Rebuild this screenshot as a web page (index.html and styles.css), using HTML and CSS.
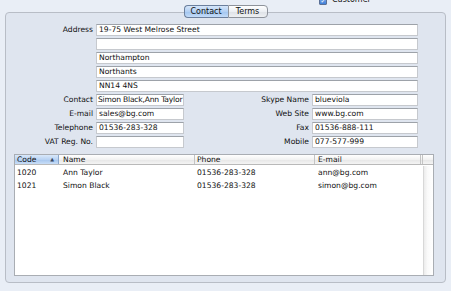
FILE: index.html
```html
<!DOCTYPE html>
<html>
<head>
    <title>Contact Card</title>
    <link rel="stylesheet" href="styles.css">
</head>
<body>
    <div class="topbar">
        <span class="check">&#10003;</span>
        <span class="check-label">Customer</span>
    </div>

    <div class="panel">
        <div class="tabs">
            <span class="tab active">Contact</span>
            <span class="tab">Terms</span>
        </div>

        <!-- Address block -->
        <div class="address">
            <label>Address</label>
            <div class="field">19-75 West Melrose Street</div>
            <label></label>
            <div class="field"></div>
            <label></label>
            <div class="field">Northampton</div>
            <label></label>
            <div class="field">Northants</div>
            <label></label>
            <div class="field">NN14 4NS</div>
        </div>

        <!-- Contact details -->
        <div class="details">
            <label>Contact</label>
            <div class="field tight">Simon Black,Ann Taylor</div>
            <label>Skype Name</label>
            <div class="field">blueviola</div>

            <label>E-mail</label>
            <div class="field">sales@bg.com</div>
            <label>Web Site</label>
            <div class="field">www.bg.com</div>

            <label>Telephone</label>
            <div class="field">01536-283-328</div>
            <label>Fax</label>
            <div class="field">01536-888-111</div>

            <label>VAT Reg. No.</label>
            <div class="field"></div>
            <label>Mobile</label>
            <div class="field">077-577-999</div>
        </div>

        <!-- Contact persons -->
        <div class="table">
            <div class="row head">
                <div class="cell sorted">Code <span class="arrow">&#9650;</span></div>
                <div class="cell">Name</div>
                <div class="cell">Phone</div>
                <div class="cell">E-mail</div>
                <div class="cell tiny"></div>
                <div class="cell corner"></div>
            </div>
            <div class="body">
                <div class="rows">
                    <div class="row">
                        <div class="cell">1020</div>
                        <div class="cell">Ann Taylor</div>
                        <div class="cell">01536-283-328</div>
                        <div class="cell">ann@bg.com</div>
                    </div>
                    <div class="row">
                        <div class="cell">1021</div>
                        <div class="cell">Simon Black</div>
                        <div class="cell">01536-283-328</div>
                        <div class="cell">simon@bg.com</div>
                    </div>
                </div>
                <div class="scroller"></div>
            </div>
        </div>
    </div>
</body>
</html>
```

FILE: styles.css
```css
body {
    margin: 0;
    background: #e9eef6;
    font-family: "DejaVu Sans", sans-serif;
    font-size: 7.6px;
    color: #111;
    height: 291px;
    overflow: hidden;
}

.topbar {
    height: 12px;
    padding-left: 319px;
    display: flex;
    align-items: flex-start;
    gap: 5px;
    font-size: 8px;
}

.check {
    margin-top: -4px;
    width: 6px;
    height: 7px;
    border: 1px solid #5a6f96;
    border-radius: 1px;
    background: linear-gradient(#8fb4ea, #3f7fd9);
    color: #fff;
    font-size: 6px;
    line-height: 7px;
    text-align: center;
}

.check-label {
    margin-top: -5px;
    line-height: 10px;
}

.panel {
    margin: 0 5px;
    height: 263px;
    border: 1px solid #b8bdc6;
    border-radius: 4px;
    background: #dfe5ef;
    padding: 0 11px 6px 0;
    display: flex;
    flex-direction: column;
}

.tabs {
    display: flex;
    justify-content: center;
    margin: -8px 0 0 11px;
    height: 13px;
}

.tab {
    height: 11px;
    line-height: 11px;
    padding: 0 6px;
    border: 1px solid #8e939b;
    background: linear-gradient(#ffffff, #eceff3 50%, #dde1e6 51%, #eef0f3);
    font-size: 8px;
}

.tab.active {
    width: 31px;
    text-align: center;
    border-radius: 4px 0 0 4px;
    border-right: none;
    background: linear-gradient(#d6e6fa, #b3d0f3 50%, #9fc3ef 51%, #c4dcf8);
    border-color: #6b7f9d;
}

.tab:last-child {
    width: 26px;
    text-align: center;
    border-radius: 0 4px 4px 0;
}

label {
    text-align: right;
    line-height: 12px;
    white-space: nowrap;
}

.field {
    height: 10px;
    line-height: 10px;
    border: 1px solid #c6c9ce;
    border-top-color: #9da2a9;
    background: #fff;
    padding-left: 2px;
    white-space: nowrap;
    overflow: hidden;
}

.field.tight {
    padding-left: 1px;
    letter-spacing: -0.2px;
}

.address {
    display: grid;
    grid-template-columns: 87px 1fr;
    column-gap: 3px;
    row-gap: 2px;
    margin: 6px 16px 0 0;
}

.details {
    display: grid;
    grid-template-columns: 87px 88px 1fr 106px;
    column-gap: 3px;
    row-gap: 2px;
    margin: 2px 16px 0 0;
}

.table {
    margin: 6px 0 0 8px;
    flex: 1;
    border: 1px solid #a9adb3;
    background: #fff;
    display: flex;
    flex-direction: column;
}

.row {
    display: flex;
    height: 13px;
    line-height: 13px;
}

.row.head {
    height: 9px;
    line-height: 9px;
    background: linear-gradient(#ffffff, #f2f2f2 50%, #e6e6e6 51%, #f4f4f4);
    border-bottom: 1px solid #b9b9b9;
}

.cell {
    padding-left: 2px;
    white-space: nowrap;
    overflow: hidden;
    box-sizing: border-box;
}

.cell:nth-child(1) { width: 44px; }
.cell:nth-child(2) { width: 136px; padding-left: 4px; }
.cell:nth-child(3) { width: 120px; }
.cell:nth-child(4) { width: 106px; padding-left: 3px; }

.head .cell {
    border-right: 1px solid #c4c4c4;
}

.head .cell.tiny {
    width: 2px;
    padding: 0;
}

.head .cell.corner {
    flex: 1;
    border-right: none;
}

.head .cell.sorted {
    position: relative;
    background: linear-gradient(#d9e8fa, #b9d3f3 50%, #a5c5ee 51%, #c9def7);
    border-right-color: #8aa7cc;
}

.arrow {
    position: absolute;
    right: 4px;
    top: 0;
    font-size: 5px;
    color: #3a4a62;
}

.body {
    flex: 1;
    display: flex;
    padding-top: 1px;
}

.rows {
    flex: 1;
}

.scroller {
    width: 9px;
    border-left: 1px solid #d8d8d8;
    background: linear-gradient(90deg, #ececec, #fafafa 40%, #ffffff);
}
```
